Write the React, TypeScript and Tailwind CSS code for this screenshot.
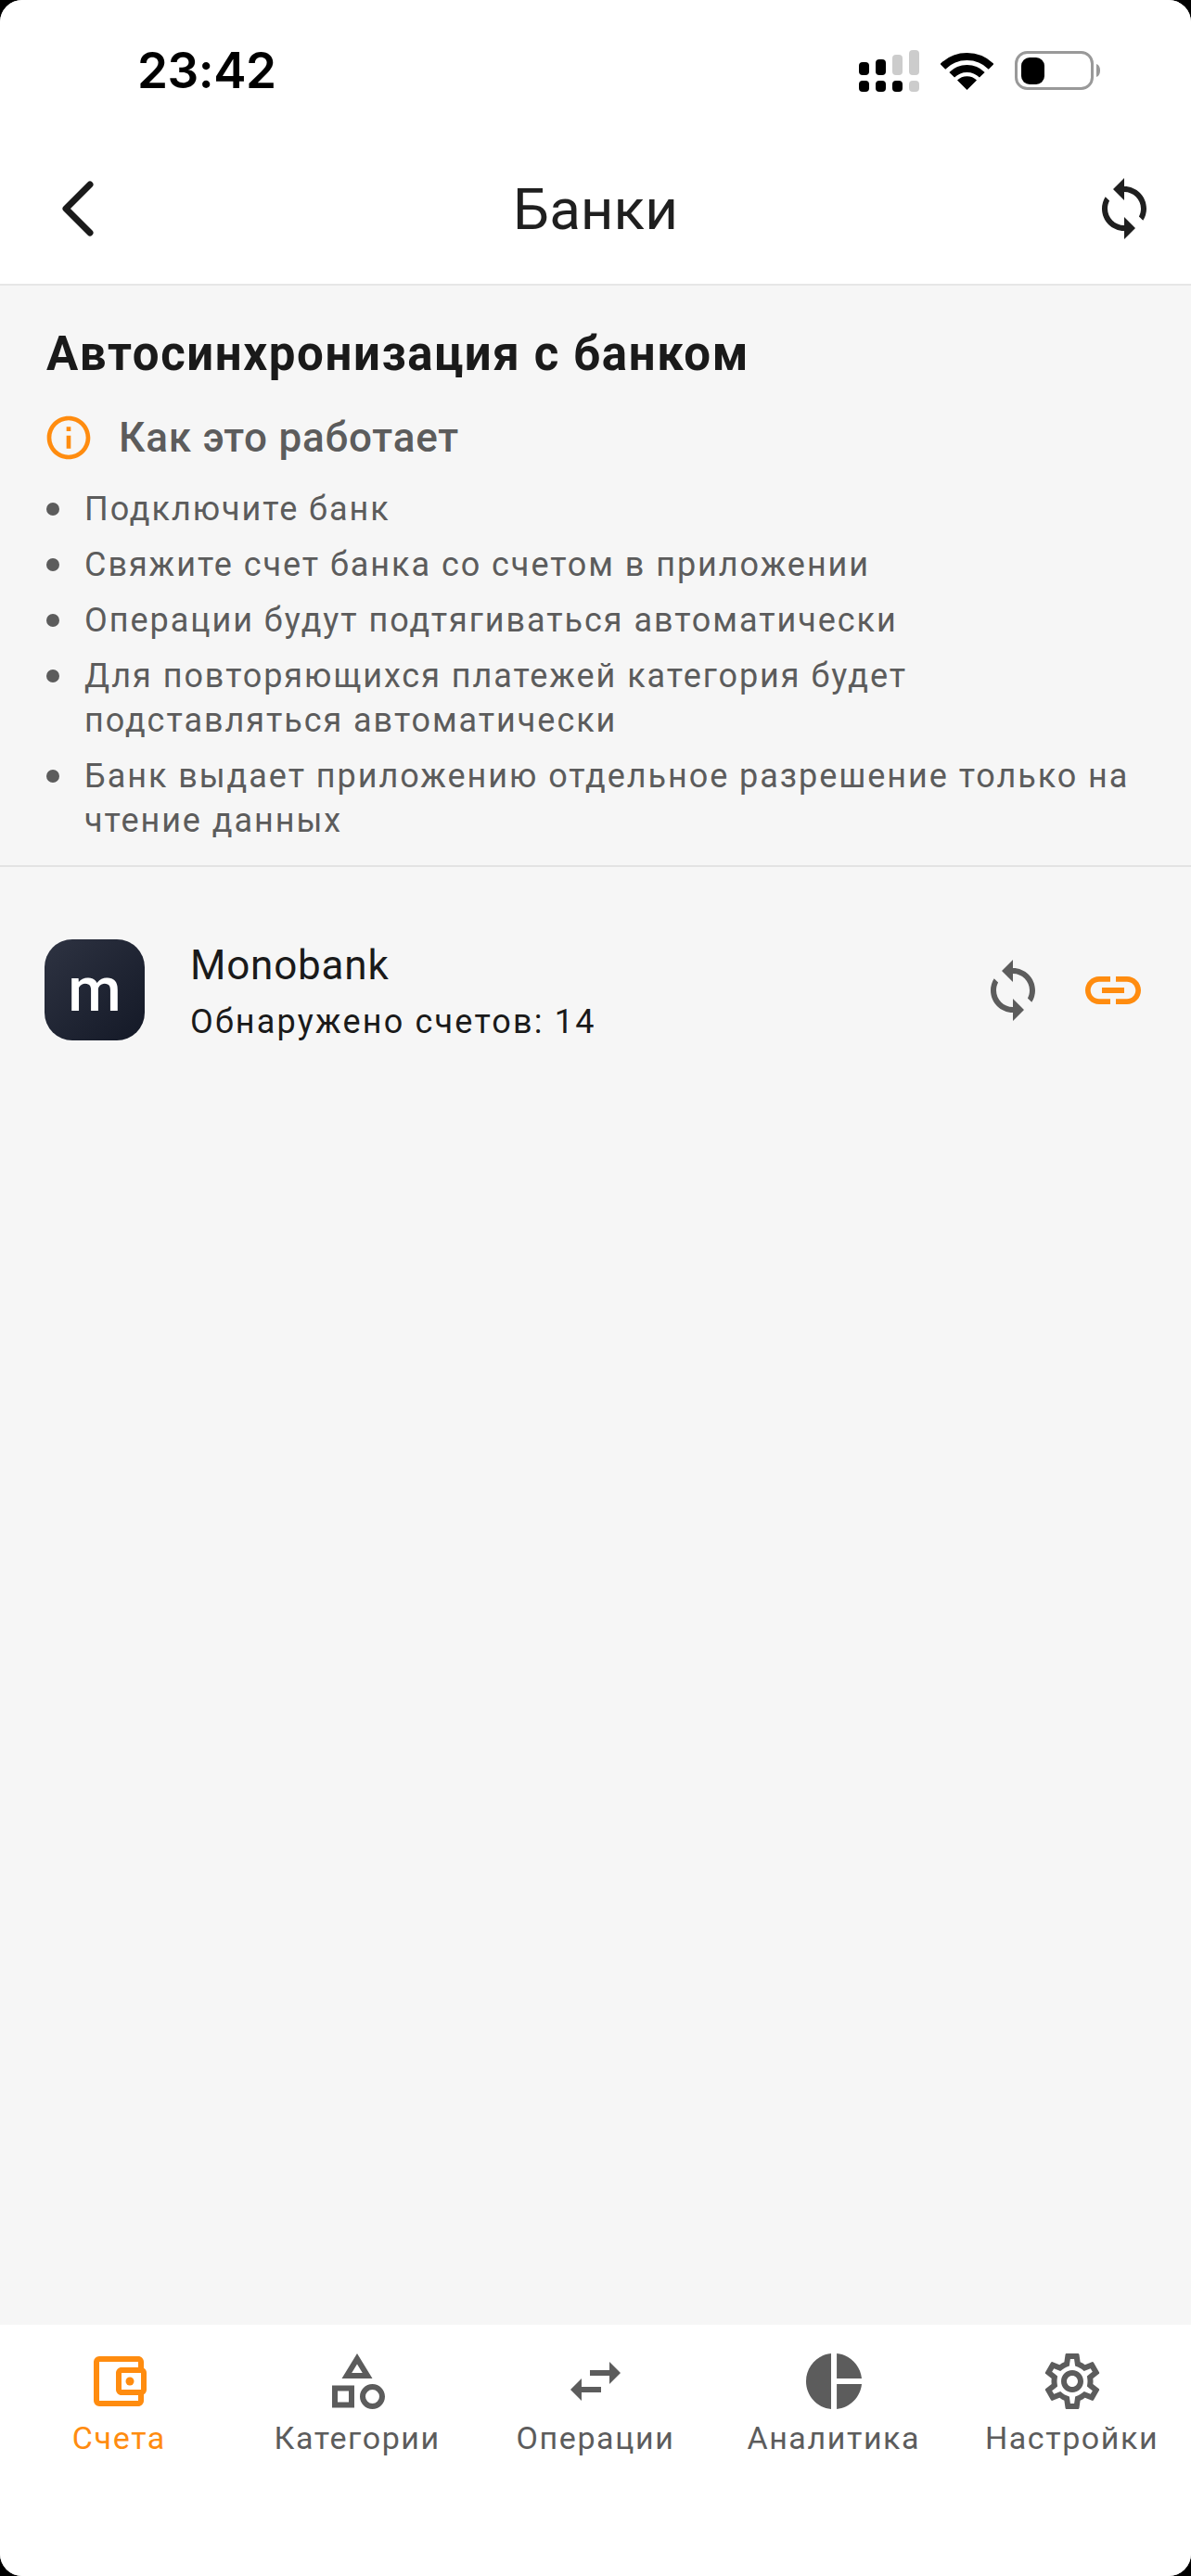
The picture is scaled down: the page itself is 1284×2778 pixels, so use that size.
import React from 'react';
import {
  MdInfoOutline,
  MdLink,
  MdOutlineAccountBalanceWallet,
  MdOutlineCategory,
  MdOutlineSettings,
  MdPieChart,
  MdSwapHoriz,
  MdSync,
} from 'react-icons/md';

const steps = [
  'Подключите банк',
  'Свяжите счет банка со счетом в приложении',
  'Операции будут подтягиваться автоматически',
  'Для повторяющихся платежей категория будет подставляться автоматически',
  'Банк выдает приложению отдельное разрешение только на чтение данных',
];

const tabs = [
  { label: 'Счета', Icon: MdOutlineAccountBalanceWallet, active: true },
  { label: 'Категории', Icon: MdOutlineCategory, active: false },
  { label: 'Операции', Icon: MdSwapHoriz, active: false },
  { label: 'Аналитика', Icon: MdPieChart, active: false },
  { label: 'Настройки', Icon: MdOutlineSettings, active: false },
];

const StatusIcons: React.FC = () => (
  <div className="flex items-center">
    <svg width="65" height="45" viewBox="0 0 65 45">
      <rect x="0" y="13" width="11" height="14" rx="4" fill="#000" />
      <rect x="18" y="10" width="11" height="17" rx="4" fill="#000" />
      <rect x="36" y="5" width="11" height="22" rx="4" fill="#ccc" />
      <rect x="54" y="0" width="11" height="27" rx="4" fill="#ccc" />
      <rect x="0" y="33" width="11" height="12" rx="4" fill="#000" />
      <rect x="18" y="33" width="11" height="12" rx="4" fill="#000" />
      <rect x="36" y="33" width="11" height="12" rx="4" fill="#000" />
      <rect x="54" y="33" width="11" height="12" rx="4" fill="#ccc" />
    </svg>
    <svg className="ml-[23px]" width="57" height="41" viewBox="0 0 57 41">
      <path d="M2.4 15.8A37 37 0 0 1 54.6 15.8" fill="none" stroke="#000" strokeWidth="8" />
      <path d="M12.2 24.7A23 23 0 0 1 44.8 24.7" fill="none" stroke="#000" strokeWidth="8" />
      <path d="M28.5 41L18 30.5A14.8 14.8 0 0 1 39 30.5Z" fill="#000" />
    </svg>
    <svg className="ml-[23px]" width="92" height="42" viewBox="0 0 92 42">
      <rect x="1.5" y="1.5" width="82" height="39" rx="12" fill="none" stroke="#999" strokeWidth="3" />
      <rect x="7" y="7" width="25" height="29" rx="9" fill="#000" />
      <path d="M88 14c3 1 4 4 4 7s-1 6-4 7z" fill="#999" />
    </svg>
  </div>
);

const App: React.FC = () => {
  return (
    <div className="bg-black">
      <div className="flex h-[2778px] flex-col overflow-hidden rounded-[24px] bg-[#f6f6f6] font-['Roboto',sans-serif]">
        <header className="h-[308px] shrink-0 border-b-2 border-[#e6e6e6] bg-white">
          <div className="flex h-[152px] items-center justify-between pr-[98px] pl-[148px]">
            <span className="font-['Inter',sans-serif] text-[53px] leading-none font-semibold tracking-[-0.5px] text-black">23:42</span>
            <StatusIcons />
          </div>
          <div className="flex h-[146px] items-center justify-between pr-[36px] pl-[66px]">
            <div className="w-[42px]">
              <svg width="36" height="60" viewBox="0 0 36 60">
                <path d="M31 4L5 30l26 26" fill="none" stroke="#1a1a1a" strokeWidth="7" strokeLinecap="round" strokeLinejoin="round" />
              </svg>
            </div>
            <h1 className="pt-[2px] text-[62px] leading-none font-normal text-[#1f1f1f]">Банки</h1>
            <MdSync className="h-[72px] w-[72px] text-[#1f1f1f]" />
          </div>
        </header>

        <section className="h-[627px] shrink-0 border-b-2 border-[#e3e3e3] px-[50px] pt-[43px]">
          <h2 className="text-[51px] leading-[62px] font-bold tracking-[1.6px] text-[#1a1a1a]">Автосинхронизация с банком</h2>
          <div className="mt-[31px] flex items-center">
            <MdInfoOutline className="ml-[-4px] h-[56px] w-[56px] text-[#ff8c0f]" />
            <span className="ml-[26px] text-[44px] leading-[54px] font-medium tracking-[0.8px] text-[#5c5c5c]">Как это работает</span>
          </div>
          <ul className="mt-[25px] flex flex-col gap-[12px]">
            {steps.map((step) => (
              <li key={step} className="flex items-start">
                <span className="mt-[17px] h-[14px] w-[14px] shrink-0 rounded-full bg-[#5c5c5c]" />
                <span className="ml-[27px] text-[36px] leading-[48px] tracking-[1.95px] text-[#5c5c5c]">{step}</span>
              </li>
            ))}
          </ul>
        </section>

        <div className="flex items-center pt-[74px] pr-[48px] pl-[48px]">
          <div className="flex h-[109px] w-[108px] shrink-0 items-center justify-center rounded-[30px] bg-gradient-to-br from-[#2e3342] to-[#141927]">
            <span className="text-[66px] leading-none font-medium text-white">m</span>
          </div>
          <div className="ml-[49px] flex-1 pt-[5px]">
            <div className="text-[44px] leading-[54px] tracking-[0.8px] text-[#1a1a1a]">Monobank</div>
            <div className="mt-[10px] text-[36px] leading-[48px] tracking-[2.2px] text-[#1a1a1a]">Обнаружено счетов: 14</div>
          </div>
          <MdSync className="h-[72px] w-[72px] text-[#5c5c5c]" />
          <MdLink className="ml-[36px] h-[72px] w-[72px] text-[#ff8c0f]" />
        </div>

        <nav className="mt-auto grid h-[271px] grid-cols-5 bg-white pt-[25px]">
          {tabs.map(({ label, Icon, active }) => (
            <div key={label} className={`flex flex-col items-center ${active ? 'text-[#ff8c0f]' : 'text-[#5c5c5c]'}`}>
              <Icon className="h-[72px] w-[72px]" />
              <span className="mt-[3px] text-[34px] leading-[44px] tracking-[1.6px] whitespace-nowrap">{label}</span>
            </div>
          ))}
        </nav>
      </div>
    </div>
  );
};

export default App;
